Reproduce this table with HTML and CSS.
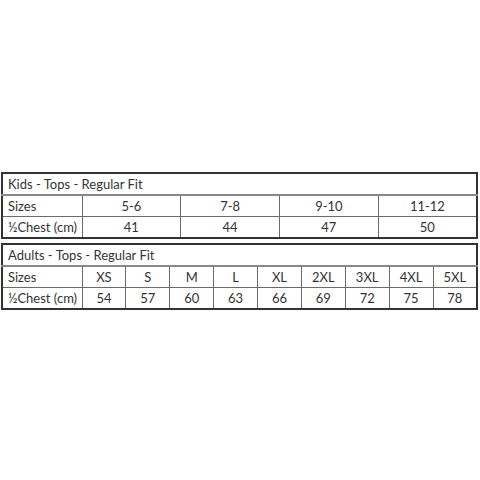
FILE: index.html
```html
<!DOCTYPE html>
<html>
<head>
<meta charset="utf-8">
<link rel="stylesheet" href="styles.css">
</head>
<body>
<div class="page">
  <table class="chart kids">
    <colgroup><col class="c-label"><col><col><col><col></colgroup>
    <tr><th class="title" colspan="5">Kids - Tops - Regular Fit</th></tr>
    <tr><td class="label">Sizes</td><td>5-6</td><td>7-8</td><td>9-10</td><td>11-12</td></tr>
    <tr><td class="label">½Chest (cm)</td><td>41</td><td>44</td><td>47</td><td>50</td></tr>
  </table>
  <table class="chart adults">
    <colgroup><col class="c-label"><col><col><col><col><col><col><col><col><col></colgroup>
    <tr><th class="title" colspan="10">Adults - Tops - Regular Fit</th></tr>
    <tr><td class="label">Sizes</td><td>XS</td><td>S</td><td>M</td><td>L</td><td>XL</td><td>2XL</td><td>3XL</td><td>4XL</td><td>5XL</td></tr>
    <tr><td class="label">½Chest (cm)</td><td>54</td><td>57</td><td>60</td><td>63</td><td>66</td><td>69</td><td>72</td><td>75</td><td>78</td></tr>
  </table>
</div>
</body>
</html>
```
FILE: styles.css
```css
html, body { margin: 0; padding: 0; background: #fff; }
.page {
  width: 480px;
  height: 480px;
  padding: 172px 2px 0 1px;
  box-sizing: border-box;
  display: flex;
  flex-direction: column;
  gap: 4px;
  font-family: Lato, "Liberation Sans", sans-serif;
  color: #333;
}
.chart {
  width: 477px;
  border-collapse: collapse;
  table-layout: fixed;
  border: 2px solid #333;
  font-size: 13px;
}
.c-label { width: 80px; }
.chart th, .chart td {
  border: 1px solid #6b6b6b;
  height: 20px;
  padding: 0;
  text-align: center;
  font-weight: normal;
  line-height: 20px;
  white-space: nowrap;
}
.chart th.title {
  text-align: left;
  padding-left: 5px;
  border-bottom: 2px solid #888;
}
.chart td.label { text-align: left; padding-left: 5px; }
```
